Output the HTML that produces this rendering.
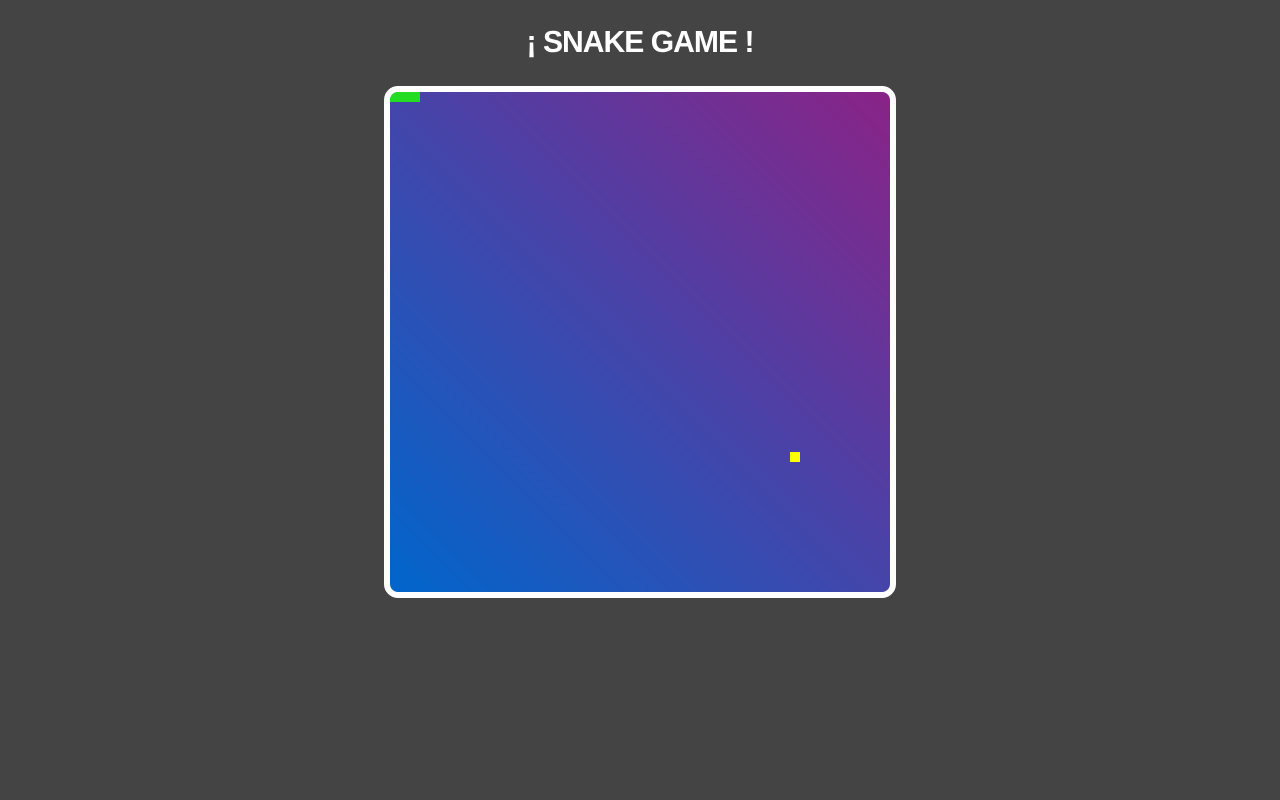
<!DOCTYPE html>
<html><head><style>
html,body{margin:0;padding:0;background:#444;width:1280px;height:800px;overflow:hidden}
h1{position:absolute;top:24px;left:0;width:1280px;margin:0;text-align:center;color:#fff;font:bold 31px "Liberation Sans",sans-serif;letter-spacing:-1px;transform:scaleX(0.97)}
.board{position:absolute;left:384px;top:86px;width:500px;height:500px;border:6px solid #fff;border-radius:14px;overflow:hidden;background:linear-gradient(to top right,#0066cc,#8a2387)}
.s{position:absolute;left:0;top:0;width:30px;height:10px;background:#22dd22}
.f{position:absolute;left:400px;top:360px;width:10px;height:10px;background:#ffff00}
</style></head><body>
<h1>¡ SNAKE GAME !</h1>
<div class="board"><div class="s"></div><div class="f"></div></div>
</body></html>
